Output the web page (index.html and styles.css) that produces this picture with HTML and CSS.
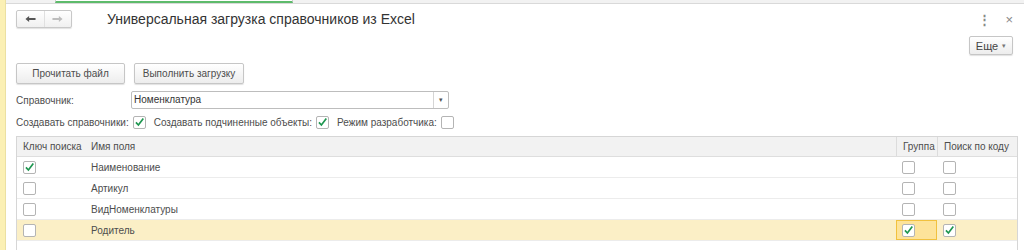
FILE: index.html
```html
<!DOCTYPE html>
<html lang="ru">
<head>
    <meta charset="UTF-8">
    <title>Универсальная загрузка справочников из Excel</title>
    <link rel="stylesheet" href="styles.css">
</head>
<body>
    <div class="app">
        <div class="side-strip"></div>
        <div class="main">
            <div class="tab-bar">
                <div class="tab-active"></div>
            </div>

            <div class="form">
                <div class="form-header">
                    <div class="nav-buttons">
                        <span class="nav-btn">
                            <svg viewBox="0 0 12 8"><path d="M0.5 4 L4.5 0.8 L4.5 3 L11.5 3 L11.5 5 L4.5 5 L4.5 7.2 Z"/></svg>
                        </span>
                        <span class="nav-btn nav-btn-off">
                            <svg viewBox="0 0 12 8"><path d="M11.5 4 L7.5 0.8 L7.5 3 L0.5 3 L0.5 5 L7.5 5 L7.5 7.2 Z"/></svg>
                        </span>
                    </div>
                    <h1 class="form-title">Универсальная загрузка справочников из Excel</h1>
                    <div class="header-icons">
                        <span class="icon-more">&#8942;</span>
                        <span class="icon-close">&#215;</span>
                    </div>
                </div>

                <div class="more-row">
                    <span class="btn btn-more">Еще <span class="caret">&#9662;</span></span>
                </div>

                <div class="command-bar">
                    <span class="btn btn-read">Прочитать файл</span>
                    <span class="btn btn-load">Выполнить загрузку</span>
                </div>

                <div class="field-row">
                    <span class="field-label">Справочник:</span>
                    <div class="select-box">
                        <span class="select-value">Номенклатура</span>
                        <span class="select-arrow">&#9662;</span>
                    </div>
                </div>

                <div class="flags-row">
                    <span class="flag-label">Создавать справочники:</span>
                    <span class="checkbox checked"><svg viewBox="0 0 13 13"><path d="M2.3 6.3 L5.2 9.4 L11 1.8"/></svg></span>
                    <span class="flag-label">Создавать подчиненные объекты:</span>
                    <span class="checkbox checked"><svg viewBox="0 0 13 13"><path d="M2.3 6.3 L5.2 9.4 L11 1.8"/></svg></span>
                    <span class="flag-label">Режим разработчика:</span>
                    <span class="checkbox"></span>
                </div>

                <div class="grid">
                    <div class="grid-row grid-head">
                        <div class="cell col-key">Ключ поиска</div>
                        <div class="cell col-name">Имя поля</div>
                        <div class="cell col-group">Группа</div>
                        <div class="cell col-code">Поиск по коду</div>
                    </div>
                    <div class="grid-row">
                        <div class="cell col-key"><span class="checkbox checked"><svg viewBox="0 0 13 13"><path d="M2.3 6.3 L5.2 9.4 L11 1.8"/></svg></span></div>
                        <div class="cell col-name">Наименование</div>
                        <div class="cell col-group"><span class="checkbox"></span></div>
                        <div class="cell col-code"><span class="checkbox"></span></div>
                    </div>
                    <div class="grid-row">
                        <div class="cell col-key"><span class="checkbox"></span></div>
                        <div class="cell col-name">Артикул</div>
                        <div class="cell col-group"><span class="checkbox"></span></div>
                        <div class="cell col-code"><span class="checkbox"></span></div>
                    </div>
                    <div class="grid-row">
                        <div class="cell col-key"><span class="checkbox"></span></div>
                        <div class="cell col-name">ВидНоменклатуры</div>
                        <div class="cell col-group"><span class="checkbox"></span></div>
                        <div class="cell col-code"><span class="checkbox"></span></div>
                    </div>
                    <div class="grid-row row-selected">
                        <div class="cell col-key"><span class="checkbox"></span></div>
                        <div class="cell col-name">Родитель</div>
                        <div class="cell col-group cell-current"><span class="checkbox checked"><svg viewBox="0 0 13 13"><path d="M2.3 6.3 L5.2 9.4 L11 1.8"/></svg></span></div>
                        <div class="cell col-code"><span class="checkbox checked"><svg viewBox="0 0 13 13"><path d="M2.3 6.3 L5.2 9.4 L11 1.8"/></svg></span></div>
                    </div>
                    <div class="grid-row grid-empty"></div>
                </div>
            </div>
        </div>
    </div>
</body>
</html>
```

FILE: styles.css
```css
html, body {
    margin: 0;
    padding: 0;
    height: 250px;
    background-color: #ffffff;
    font-family: Arial, "Liberation Sans", sans-serif;
    font-size: 10px;
    color: #4d4d4d;
    overflow: hidden;
}

.app {
    display: flex;
    width: 1024px;
    height: 250px;
    overflow: hidden;
}

.side-strip {
    width: 5px;
    background-color: #fbf0b4;
    border-right: 1px solid #ebe0a2;
}

.main {
    flex: 1;
    display: flex;
    flex-direction: column;
    overflow: hidden;
}

/* top tab strip */
.tab-bar {
    height: 3px;
    background-color: #f2f2f2;
    border-bottom: 1px solid #d9d9d9;
    padding-left: 49px;
}

.tab-active {
    width: 236px;
    height: 1px;
    margin-top: 0;
    background-color: #ffffff;
    border-left: 1px solid #cfcfcf;
    border-right: 1px solid #cfcfcf;
    border-bottom: 2px solid #5dbb6b;
}

.form {
    padding: 6px 6px 0 10px;
}

.form-header {
    display: flex;
    align-items: center;
    height: 18px;
}

.nav-buttons {
    display: flex;
    width: 54px;
    height: 16px;
    border: 1px solid #c8c8c8;
    border-radius: 2px;
    background: linear-gradient(#ffffff, #f0f0f0);
    box-shadow: 0 1px 1px rgba(0, 0, 0, 0.12);
}

.nav-btn {
    flex: 1;
    display: flex;
    align-items: center;
    justify-content: center;
}

.nav-btn svg {
    width: 11px;
    height: 8px;
    fill: #555555;
}

.nav-btn + .nav-btn {
    border-left: 1px solid #e0e0e0;
}

.nav-btn-off svg {
    fill: #bdbdbd;
}

.form-title {
    margin: 0 0 0 35px;
    font-size: 14px;
    font-weight: normal;
    color: #333333;
}

.header-icons {
    margin-left: auto;
    display: flex;
    align-items: center;
    gap: 14px;
    padding-right: 5px;
    color: #888888;
}

.icon-more {
    font-size: 13px;
    font-weight: bold;
}

.icon-close {
    font-size: 13px;
}

.more-row {
    display: flex;
    justify-content: flex-end;
    margin-top: 8px;
    padding-right: 5px;
}

.btn {
    display: inline-flex;
    align-items: center;
    justify-content: center;
    box-sizing: border-box;
    height: 21px;
    border: 1px solid #c6c6c6;
    border-radius: 2px;
    background: linear-gradient(#ffffff, #ededed);
    box-shadow: 0 1px 1px rgba(0, 0, 0, 0.12);
    color: #4d4d4d;
}

.btn-more {
    width: 44px;
    height: 19px;
    font-size: 11px;
    color: #444444;
    gap: 4px;
}

.caret {
    font-size: 7px;
    color: #777777;
}

.command-bar {
    display: flex;
    gap: 9px;
    margin-top: 8px;
}

.btn-read {
    width: 109px;
}

.btn-load {
    width: 110px;
}

.field-row {
    display: flex;
    align-items: center;
    margin-top: 7px;
    height: 18px;
}

.field-label {
    width: 115px;
}

.select-box {
    display: flex;
    width: 318px;
    height: 18px;
    box-sizing: border-box;
    border: 1px solid #bdbdbd;
    border-radius: 2px;
}

.select-value {
    flex: 1;
    padding-left: 2px;
    line-height: 16px;
    color: #333333;
}

.select-arrow {
    width: 14px;
    border-left: 1px solid #d5d5d5;
    text-align: center;
    font-size: 7px;
    line-height: 16px;
    color: #555555;
}

.flags-row {
    display: flex;
    align-items: center;
    margin-top: 7px;
    height: 13px;
}

.flag-label {
    margin-right: 4px;
}

.flag-label + .checkbox {
    margin-right: 8px;
}

.checkbox {
    display: inline-block;
    box-sizing: border-box;
    width: 13px;
    height: 13px;
    border: 1px solid #b4b4b4;
    border-radius: 2px;
    background-color: #ffffff;
}

.checkbox svg {
    display: block;
    width: 11px;
    height: 11px;
    overflow: visible;
}

.checkbox svg path {
    fill: none;
    stroke: #1e9650;
    stroke-width: 2;
}

/* table */
.grid {
    margin-top: 7px;
    border-left: 1px solid #d6d6d6;
    border-right: 1px solid #d6d6d6;
    border-top: 1px solid #d6d6d6;
}

.grid-row {
    display: flex;
    height: 21px;
    border-bottom: 1px solid #ececec;
    box-sizing: border-box;
}

.grid-head {
    height: 20px;
    background-color: #f2f2f2;
    border-bottom: 1px solid #dedede;
}

.grid-empty {
    border-bottom: none;
}

.cell {
    display: flex;
    align-items: center;
    box-sizing: border-box;
    padding-left: 6px;
    white-space: nowrap;
}

.col-key {
    width: 68px;
}

.col-name {
    flex: 1;
}

.col-group {
    width: 41px;
}

.col-code {
    width: 80px;
}

.grid-head .col-group,
.grid-head .col-code {
    border-left: 1px solid #dcdcdc;
}

.row-selected {
    background-color: #fbefc6;
}

.cell-current {
    background-color: #fde39a;
    border: 1px solid #f1c13e;
    padding-left: 5px;
}
```
